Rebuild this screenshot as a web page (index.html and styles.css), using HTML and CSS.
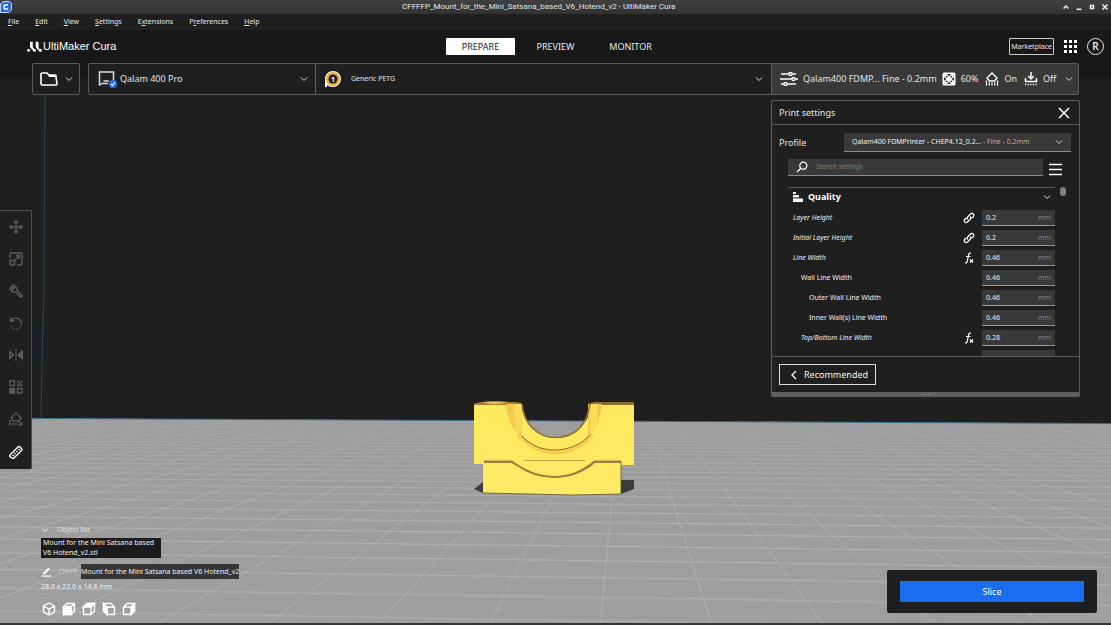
FILE: index.html
```html
<!DOCTYPE html>
<html lang="en">
<head>
<meta charset="utf-8">
<title>CFFFFP_Mount_for_the_Mini_Satsana_based_V6_Hotend_v2 - UltiMaker Cura</title>
<link rel="stylesheet" href="styles.css">
</head>
<body>
<svg class="scene" viewBox="0 0 1111 625" preserveAspectRatio="xMidYMid slice" aria-hidden="true">
  <defs>
    <clipPath id="plate"><path d="M0 418.500L41 418.500 1111 423.500V625H0Z"/></clipPath>
    <linearGradient id="haze" x1="0" x2="0" y1="0" y2="1"><stop offset="0" stop-color="#9e9e9e" stop-opacity=".75"/><stop offset="1" stop-color="#a2a2a2" stop-opacity="0"/></linearGradient>
    <linearGradient id="fillet" x1="0" x2="1"><stop offset="0" stop-color="#f6c952"/><stop offset=".5" stop-color="#fbd956"/><stop offset="1" stop-color="#f3c44e"/></linearGradient>
    <linearGradient id="body" x1="0" x2="0" y1="0" y2="1"><stop offset="0" stop-color="#ffe95c"/><stop offset="1" stop-color="#fdea66"/></linearGradient>
  </defs>
  <rect width="1111" height="625" fill="#1f1f1f"/>
  <g clip-path="url(#plate)">
    <rect width="1111" height="625" fill="#a0a0a0"/>
    <path class="grid-minor" id="grid-minor"/>
    <path class="grid-major" id="grid-major"/>
    <rect y="418" width="1111" height="110" fill="url(#haze)"/>
  </g>
  <path d="M45 80L44 290 42.500 340 41 418.500" fill="none" stroke="#1d4a5c"/>
  <path d="M32 419L41 418.500 1111 423.500" fill="none" stroke="#3b6c83"/>
  <path d="M474 489L483 482V493ZM621 480H634V489L621 494Z" fill="#3c3c3c"/>
  <path d="M474 404L482 402 495 401 521 403 523 412C526 426 538 437 556 437S586 426 589 413L590 403 601 402H634V465H621V494L573 495 483 493V464H474Z" fill="url(#body)"/>
  <path d="M474 404L482 402 495 401 522 403 521 405H474Z" fill="#a17a35"/>
  <path d="M483 403Q494 401 508 403Q494 405 483 403" fill="#f2c850"/>
  <path d="M589 403L601 402H634V405H589Z" fill="#8d6b31"/>
  <path d="M506 404H522V437Q508 428 506 404ZM588 404H602Q600 425 588 437Z" fill="url(#fillet)"/>
  <path d="M514 404H521V436L516 430ZM590 404H597V425L590 434Z" fill="#fbdc56"/>
  <path d="M522 404C524 424 537 437.500 556 437.500S587 425 590 404" fill="none" stroke="#8f6c35" stroke-width="1.500"/>
  <path d="M518 434C530 447 542 452.500 556 452.500S583 446 592 434" fill="none" stroke="#f6cc50" stroke-width="4"/>
  <path d="M522 436C530 445 541 450 555 450S582 444 590 435" fill="none" stroke="#8f6c35"/>
  <path d="M524 460.500H585" stroke="#9b7e35" stroke-width=".7"/>
  <path d="M484 460.500H512L517 464Q535 476 554 476Q576 476 594 460.500H621V463H595Q577 478 554 478Q534 478 515 465L511 463H484Z" fill="#a17d3b"/>
  <path d="M483 493L573 495 621 494V462" fill="none" stroke="#5a5437" stroke-width=".8"/>
</svg>

<header class="titlebar">
  <svg class="app-icon" viewBox="0 0 12 12" aria-hidden="true"><path d="M3 .5H9.500L11.500 2.500V9L9 11.500H.5V3Z" fill="#2b6be4" stroke="#b9d1ff"/><path d="M8 4H5Q4 4 4 5V7Q4 8 5 8H8" fill="none" stroke="#fff" stroke-width="1.300"/></svg>
  <h1 class="window-title">CFFFFP_Mount_for_the_Mini_Satsana_based_V6_Hotend_v2 - UltiMaker Cura</h1>
  <div class="window-buttons">
    <button type="button" aria-label="Shade"><svg viewBox="0 0 8 8"><path d="M1.500 5.500L4 3 6.500 5.500"/></svg></button>
    <button type="button" aria-label="Minimize"><svg viewBox="0 0 8 8"><path d="M1.500 6.300H6.500"/></svg></button>
    <button type="button" aria-label="Maximize"><svg viewBox="0 0 8 8"><path d="M2.500 2.500H5.500V5.500H2.500Z"/></svg></button>
    <button type="button" aria-label="Close window"><svg viewBox="0 0 8 8"><path d="M1.500 1.500L6.500 6.500M6.500 1.500L1.500 6.500"/></svg></button>
  </div>
</header>

<nav class="menubar" aria-label="Menu">
  <button type="button"><u>F</u>ile</button>
  <button type="button"><u>E</u>dit</button>
  <button type="button"><u>V</u>iew</button>
  <button type="button"><u>S</u>ettings</button>
  <button type="button">E<u>x</u>tensions</button>
  <button type="button">P<u>r</u>eferences</button>
  <button type="button"><u>H</u>elp</button>
</nav>

<div class="header">
  <div class="brand">
    <svg viewBox="0 0 15 11" aria-hidden="true"><path d="M3 .8H5.800V6L8.300 9.500 7 10.500 5 8.500 3 6ZM8.700 .8H11.500V6L12.500 8 11 9 8.700 6Z" fill="#fff"/><g fill="#fff"><circle cx="1.600" cy="9.200" r="1.500"/><circle cx="7.500" cy="9.200" r="1.500"/><circle cx="13.300" cy="9.200" r="1.500"/></g></svg>
    <span>UltiMaker Cura</span>
  </div>
  <nav class="stages" aria-label="Stages">
    <button type="button" class="stage stage-active">PREPARE</button>
    <button type="button" class="stage">PREVIEW</button>
    <button type="button" class="stage">MONITOR</button>
  </nav>
  <div class="account">
    <button type="button" class="marketplace">Marketplace</button>
    <button type="button" class="icon-button" aria-label="Applications"><svg class="apps-icon" viewBox="0 0 13 13"><path d="M0 0h3v3H0zM5 0h3v3H5zM10 0h3v3h-3zM0 5h3v3H0zM5 5h3v3H5zM10 5h3v3h-3zM0 10h3v3H0zM5 10h3v3H5zM10 10h3v3h-3z" fill="#fff"/></svg></button>
    <button type="button" class="avatar">R</button>
  </div>
</div>

<div class="toolbar">
  <button type="button" class="open-file" aria-label="Open file">
    <svg class="folder-icon" viewBox="0 0 18 14"><path d="M1 11.500V2Q1 1 2 1H7L9 3H15Q16 3 16 4V5L17 12Q17 13 16 13H2.500Q1 13 1 11.500Z" fill="none" stroke="#fff" stroke-width="1.600"/><path d="M7 1L9 5H16.500L16 3H9Z" fill="#fff"/></svg>
    <svg class="chevron" viewBox="0 0 8 8"><path d="M1 2.500L4 5.500 7 2.500"/></svg>
  </button>
  <div class="stage-menu">
    <button type="button" class="machine">
      <svg class="printer-icon" viewBox="0 0 20 18"><path d="M1.500 15V2H15.500V10" fill="none" stroke="#ddd" stroke-width="1.500"/><path d="M1 15.500L4 13.500H10M5.500 11H11" fill="none" stroke="#ddd" stroke-width="1.400"/><circle cx="15" cy="14" r="4" fill="#2277ee"/><path d="M13 14L14.500 15.500 17 12.500" fill="none" stroke="#fff" stroke-width="1.100"/></svg>
      <span class="menu-label">Qalam 400 Pro</span>
      <svg class="chevron" viewBox="0 0 8 8"><path d="M1 2.500L4 5.500 7 2.500"/></svg>
    </button>
    <button type="button" class="material">
      <svg class="spool-icon" viewBox="0 0 18 18"><path d="M1 17V9A8 8 0 1 1 9 17Q5 17 3 15V17Z" fill="#fff"/><circle cx="9" cy="9" r="7" fill="#efab32"/><circle cx="9" cy="9" r="4.500" fill="#221d18"/><text class="spool-number" x="9" y="11.500">1</text></svg>
      <span class="menu-label small">Generic PETG</span>
      <svg class="chevron" viewBox="0 0 8 8"><path d="M1 2.500L4 5.500 7 2.500"/></svg>
    </button>
    <button type="button" class="print-setup">
      <svg class="sliders-icon" viewBox="0 0 18 14"><g fill="none" stroke="#fff" stroke-width="1.500"><path d="M1 2H8.500M12.500 2H16M0 7H11.500M15.500 7H18M1 12H3.500M7.500 12H16"/><circle cx="10.500" cy="2" r="1.600"/><circle cx="13.500" cy="7" r="1.600"/><circle cx="5.500" cy="12" r="1.600"/></g></svg>
      <span class="menu-label">Qalam400 FDMP... Fine - 0.2mm</span>
      <svg class="infill-icon" viewBox="0 0 14 14"><rect x=".5" y=".5" width="13" height="13" rx="1.500" fill="#fff"/><g fill="#303030"><path d="M5 2H9L7 4.500ZM5 12H9L7 9.500ZM2 5V9L4.500 7ZM12 5V9L9.500 7Z"/><circle cx="4.700" cy="4.700" r=".9"/><circle cx="9.300" cy="4.700" r=".9"/><circle cx="4.700" cy="9.300" r=".9"/><circle cx="9.300" cy="9.300" r=".9"/></g></svg>
      <span class="setup-value">60%</span>
      <svg class="support-icon" viewBox="0 0 14 14"><path d="M7 1L12 6 9.500 9H4.500L2 6Z" fill="none" stroke="#fff" stroke-width="1.400"/><path d="M1.500 13.500V8.500M4.200 13.500V10.500M7 13.500V10.500M9.800 13.500V10.500M12.500 13.500V8.500" stroke="#fff" stroke-width="1.200"/></svg>
      <span class="setup-value">On</span>
      <svg class="adhesion-icon" viewBox="0 0 14 14"><path d="M7 0V6.500M4.200 4L7 7 9.800 4M1.500 6V9.500H12.500V6" fill="none" stroke="#fff" stroke-width="1.500"/><path d="M1 12.500H13" stroke="#fff" stroke-width="1.300" stroke-dasharray="1.300 1.300"/></svg>
      <span class="setup-value">Off</span>
      <svg class="chevron setup-chevron" viewBox="0 0 8 8"><path d="M1 2.500L4 5.500 7 2.500"/></svg>
    </button>
  </div>
</div>

<main class="workspace">
  <div class="tools" role="toolbar" aria-label="Tools">
    <button type="button" aria-label="Move"><svg viewBox="0 0 14 14"><path d="M7 1V13M1 7H13M5 3L7 1 9 3M5 11L7 13 9 11M3 5L1 7 3 9M11 5L13 7 11 9"/></svg></button>
    <button type="button" aria-label="Scale"><svg viewBox="0 0 14 14"><path d="M1 6V2Q1 1 2 1H12Q13 1 13 2V12Q13 13 12 13H8M1 8.500H5.500V13H2Q1 13 1 12ZM6 8L10.500 3.500M7 3.500H10.500V7"/></svg></button>
    <button type="button" aria-label="Paint"><svg viewBox="0 0 14 14"><path d="M4.500 .8L.8 4.500 4 8 6.500 8.200 12 13.200 13.200 12 8.200 6.500 8 4ZM2.500 6.500L6.500 2.500M2.800 2.800L4.500 4.500"/></svg></button>
    <button type="button" aria-label="Rotate"><svg viewBox="0 0 14 14"><path d="M1.500 1V5H5.500M2 4.500Q5 1 9 2.500Q12.500 4 12.500 8"/><path d="M12.500 9Q11 13 7 13Q2 13 1.500 8" stroke-dasharray="1.500 1.500"/></svg></button>
    <button type="button" aria-label="Mirror"><svg viewBox="0 0 14 14"><path d="M1 3.500V10.500L4.500 7Z"/><path class="solid" d="M13.500 3V11L9 7Z"/><path d="M7 1V13" stroke-dasharray="2 1.300"/></svg></button>
    <button type="button" aria-label="Per model settings"><svg viewBox="0 0 14 14"><path d="M1 1H5.500V5.500H1ZM8.500 8.500H13V13H8.500ZM8 3L10 1M8 6.200L13.200 1M11 6.200L13.200 4"/><path class="solid" d="M1 8.500H5.500V13H1Z"/></svg></button>
    <button type="button" aria-label="Support blocker"><svg viewBox="0 0 14 14"><path d="M7 1L12 6 9.500 9H4.500L2 6ZM1 13.500V8M4 13.500V11M7 13.500V11M10 10L13.500 13.500M13.500 10L10 13.500"/></svg></button>
    <button type="button" class="tool-enabled" aria-label="Measure"><svg viewBox="0 0 14 14"><path d="M1 10L9 2Q10 1 11 2L12.500 3.500Q13.500 4.500 12.500 5.500L5 13Q4 14 3 13L1 11.500Q.3 10.800 1 10ZM3.500 10L5 11M5.500 8L6.500 9M7.500 6L8.500 7M9.500 4L11 5"/></svg></button>
  </div>

  <section class="objects" aria-label="Objects">
    <button type="button" class="object-toggle"><svg class="chevron" viewBox="0 0 8 8"><path d="M1 2.500L4 5.500 7 2.500"/></svg>Object list</button>
    <p class="object-name">Mount for the Mini Satsana based V6 Hotend_v2.stl</p>
    <div class="job">
      <svg class="pencil-icon" viewBox="0 0 10 10" aria-hidden="true"><path d="M1 7.500L1.500 5.500 6.500 .8 8 2 3 7ZM0 8.600H9V9.800H0Z" fill="#fff"/></svg>
      <span class="job-prefix">CFFFP_</span>
      <span class="job-tip">Mount for the Mini Satsana based V6 Hotend_v2</span>
    </div>
    <p class="dimensions">28.0 x 22.0 x 14.8 mm</p>
    <div class="views">
      <button type="button" aria-label="3D view"><svg viewBox="0 0 14 14"><path d="M7 1L12.500 4V10L7 13 1.500 10V4ZM1.500 4L7 7 12.500 4M7 7V13"/></svg></button>
      <button type="button" aria-label="Front view"><svg viewBox="0 0 14 14"><path d="M1.500 5L5 1.500H12.500V9L9 12.500H1.500ZM9 5L12.500 1.500"/><path class="solid" d="M1.500 4.500H9.500V12.500H1.500Z"/></svg></button>
      <button type="button" aria-label="Top view"><svg viewBox="0 0 14 14"><path d="M1.500 5L5 1.500H12.500V9L9 12.500H1.500ZM9 5V12"/><path class="solid" d="M1.500 5L5 1.500H12.500L9 5Z"/></svg></button>
      <button type="button" aria-label="Left view"><svg viewBox="0 0 14 14"><path d="M1.500 1.500H9L12.500 5V12.500H5L1.500 9ZM5 5H12M5 5V12"/><path class="solid" d="M1.500 1.500L5 5V12.500L1.500 9Z"/></svg></button>
      <button type="button" aria-label="Right view"><svg viewBox="0 0 14 14"><path d="M1.500 5L5 1.500H12.500V9L9 12.500H1.500ZM1.500 5H9"/><path class="solid" d="M9 5L12.500 1.500V9L9 12.500Z"/></svg></button>
    </div>
  </section>

  <aside class="side">
    <section class="panel" aria-label="Print settings">
      <div class="panel-header">
        <h2>Print settings</h2>
        <button type="button" class="icon-button" aria-label="Close"><svg class="close-icon" viewBox="0 0 12 12"><path d="M1 1L11 11M11 1L1 11"/></svg></button>
      </div>
      <div class="profile">
        <label for="profile">Profile</label>
        <div class="select-wrap">
          <select id="profile"><option>Qalam400 FDMPrinter - CHEP4.12_0.2...</option></select>
          <span class="select-note">- Fine - 0.2mm</span>
          <svg class="chevron select-arrow" viewBox="0 0 8 8"><path d="M1 2.500L4 5.500 7 2.500"/></svg>
        </div>
      </div>
      <div class="search-row">
        <div class="search">
          <svg viewBox="0 0 12 12" aria-hidden="true"><circle cx="7.300" cy="4.700" r="3.500"/><path d="M4.800 7.200L1 11"/></svg>
          <input type="search" placeholder="Search settings" aria-label="Search settings">
        </div>
        <button type="button" class="icon-button" aria-label="Setting visibility"><svg class="burger-icon" viewBox="0 0 13 13"><path d="M0 1.500H13M0 6.500H13M0 11.500H13"/></svg></button>
      </div>
      <div class="settings">
        <div class="settings-list">
          <button type="button" class="category">
            <svg class="quality-icon" viewBox="0 0 10 10"><path d="M0 0H3V2H0ZM0 3H6V5.500H0ZM0 6.500H10V10H0Z" fill="#fff"/></svg>
            <span>Quality</span>
            <svg class="chevron" viewBox="0 0 8 8"><path d="M1 2.500L4 5.500 7 2.500"/></svg>
          </button>
          <div class="setting changed">
            <label for="s1">Layer Height</label>
            <svg class="mark" viewBox="0 0 12 12"><path d="M5 7.500Q3.500 6 5 4.500L7.500 2Q9 .8 10.300 2Q11.500 3.300 10 5L8.500 6.300M7 4.500Q8.500 6 7 7.500L4.500 10Q3 11.200 1.700 10Q.5 8.700 2 7L3.500 5.700"/></svg>
            <div class="value"><input id="s1" type="text" value="0.2"><span>mm</span></div>
          </div>
          <div class="setting changed">
            <label for="s2">Initial Layer Height</label>
            <svg class="mark" viewBox="0 0 12 12"><path d="M5 7.500Q3.500 6 5 4.500L7.500 2Q9 .8 10.300 2Q11.500 3.300 10 5L8.500 6.300M7 4.500Q8.500 6 7 7.500L4.500 10Q3 11.200 1.700 10Q.5 8.700 2 7L3.500 5.700"/></svg>
            <div class="value"><input id="s2" type="text" value="0.2"><span>mm</span></div>
          </div>
          <div class="setting changed">
            <label for="s3">Line Width</label>
            <svg class="mark" viewBox="0 0 12 12"><path d="M8 1.200Q6 .5 5.500 3L4.300 9Q4 11.500 2 10.800M3 4.500H7.500M7 7.500L10 10.500M10 7.500L7 10.500"/></svg>
            <div class="value"><input id="s3" type="text" value="0.46"><span>mm</span></div>
          </div>
          <div class="setting level-1">
            <label for="s4">Wall Line Width</label>
            <div class="value"><input id="s4" type="text" value="0.46"><span>mm</span></div>
          </div>
          <div class="setting level-2">
            <label for="s5">Outer Wall Line Width</label>
            <div class="value"><input id="s5" type="text" value="0.46"><span>mm</span></div>
          </div>
          <div class="setting level-2">
            <label for="s6">Inner Wall(s) Line Width</label>
            <div class="value"><input id="s6" type="text" value="0.46"><span>mm</span></div>
          </div>
          <div class="setting changed level-1">
            <label for="s7">Top/Bottom Line Width</label>
            <svg class="mark" viewBox="0 0 12 12"><path d="M8 1.200Q6 .5 5.500 3L4.300 9Q4 11.500 2 10.800M3 4.500H7.500M7 7.500L10 10.500M10 7.500L7 10.500"/></svg>
            <div class="value"><input id="s7" type="text" value="0.28"><span>mm</span></div>
          </div>
          <div class="next-value"></div>
        </div>
        <div class="scroll-thumb"></div>
      </div>
      <div class="panel-footer">
        <button type="button" class="recommended"><svg class="chevron" viewBox="0 0 8 10"><path d="M6 1L2 5 6 9"/></svg>Recommended</button>
      </div>
      <div class="resize-handle"><i></i><i></i><i></i></div>
    </section>
    <div class="action">
      <button type="button" class="slice">Slice</button>
    </div>
  </aside>
</main>
<script src="scene.js"></script>
</body>
</html>
```
FILE: styles.css
```css
* {
  box-sizing: border-box;
}

body {
  margin: 0;
  min-height: 100vh;
  display: flex;
  flex-direction: column;
  position: relative;
  isolation: isolate;
  color: #e6e6e6;
  background: #1f1f1f;
  font: 7px/10px "Noto Sans", sans-serif;
}

button,
input,
select {
  font: inherit;
  color: inherit;
}

button {
  padding: 0;
  border: 0;
  background: none;
}

h1,
h2,
p {
  margin: 0;
  font-size: inherit;
  font-weight: 400;
}

svg {
  flex: none;
}

.scene {
  position: absolute;
  inset: 0;
  width: 100%;
  height: 100%;
  z-index: -1;
}

.grid-major {
  fill: none;
  stroke: #b8b8b8;
  stroke-opacity: 0.65;
}

.grid-minor {
  fill: none;
  stroke: #8c8c8c;
  stroke-opacity: 0.22;
}

.chevron {
  width: 8px;
  height: 8px;
  fill: none;
  stroke: #e0e0e0;
}

.icon-button {
  display: flex;
}

/* Window chrome */
.titlebar {
  height: 14px;
  display: grid;
  grid-template-columns: 402px 1fr auto;
  align-items: center;
  background: linear-gradient(#404040, #323232);
}

.app-icon {
  width: 12px;
  height: 12px;
}

.window-title {
  font: 8px/12px Roboto, "Noto Sans", sans-serif;
}

.window-buttons {
  display: flex;
  gap: 5px;
  padding-right: 2px;
}

.window-buttons button {
  display: flex;
}

.window-buttons svg {
  width: 8px;
  height: 8px;
  fill: none;
  stroke: #f0f0f0;
  stroke-width: 1.5;
}

.menubar {
  height: 16px;
  display: flex;
  align-items: center;
  gap: 16px;
  padding-left: 8px;
  background: #1f1f1f;
}

/* Brand, stages, account */
.header {
  height: 49px;
  display: grid;
  grid-template-columns: 1fr auto 1fr;
  align-items: start;
  padding: 8px 7px 0 27px;
  background: #181818;
}

.brand {
  display: flex;
  align-items: center;
  gap: 1px;
  color: #fff;
  font: 11px/16px "Liberation Sans", Arial, sans-serif;
}

.brand svg {
  width: 15px;
  height: 11px;
}

.stages {
  display: flex;
  gap: 6px;
  margin-right: 20px;
}

.stage {
  width: 69px;
  height: 17px;
  font-size: 9px;
  border-radius: 1px;
}

.stage-active {
  color: #222;
  background: #fff;
}

.account {
  display: flex;
  align-items: center;
  justify-content: flex-end;
  gap: 10px;
}

.marketplace {
  padding: 2px 1px;
  height: 17px;
  border: 1px solid #ccc;
  border-radius: 1px;
}

.apps-icon {
  width: 13px;
  height: 13px;
}

.avatar {
  width: 17px;
  height: 17px;
  border: 1px solid #eee;
  border-radius: 50%;
  font-size: 10px;
  line-height: 15px;
  font-weight: 600;
}

/* Stage menu */
.toolbar {
  display: flex;
  gap: 8px;
  height: 32px;
  margin: -16px 32px 0;
  font-size: 9px;
}

.open-file {
  width: 48px;
  display: flex;
  align-items: center;
  justify-content: space-between;
  padding: 0 6px 0 7px;
  border: 1px solid #5c5c5c;
  border-radius: 2px;
  background: #1f1f1f;
}

.folder-icon {
  width: 18px;
  height: 14px;
}

.stage-menu {
  flex: 1;
  display: grid;
  grid-template-columns: 227px 1fr 307px;
  border: 1px solid #5c5c5c;
  border-radius: 2px;
  background: #1f1f1f;
}

.stage-menu button {
  display: flex;
  align-items: center;
  text-align: left;
}

.stage-menu .material {
  padding: 0 8px;
  gap: 9px;
}

.stage-menu .machine {
  padding: 0 7px 0 9px;
  gap: 2px;
  border-right: 1px solid #5c5c5c;
}

.stage-menu .print-setup {
  padding: 0 8px;
  gap: 5px;
  border-left: 1px solid #5c5c5c;
  background: #393939;
}

.menu-label {
  flex: 1;
  white-space: nowrap;
}

.small {
  font-size: 7px;
}

.printer-icon {
  width: 20px;
  height: 18px;
}

.spool-icon {
  width: 18px;
  height: 18px;
}

.spool-number {
  font: 700 7px "Noto Sans", sans-serif;
  fill: #fff;
  text-anchor: middle;
}

.sliders-icon {
  width: 18px;
  height: 14px;
}

.infill-icon,
.support-icon,
.adhesion-icon {
  width: 14px;
  height: 14px;
}

.setup-value {
  margin-right: 2px;
}

.setup-chevron {
  margin-left: 2px;
}

/* Workspace */
.workspace {
  flex: 1;
  display: grid;
  grid-template-columns: 32px 1fr auto;
  border-bottom: 2px solid #353535;
}

.tools {
  align-self: start;
  display: flex;
  flex-direction: column;
  margin-top: 115px;
  border: 1px solid #505050;
  border-left: 0;
  border-bottom: 0;
  border-radius: 0 2px 2px 0;
  background: #1f1f1f;
}

.tools button {
  height: 32px;
  display: grid;
  place-items: center;
  color: #5c5c5c;
}

.tools .tool-enabled {
  color: #fff;
  height: 34px;
}

.tools svg,
.views svg {
  width: 14px;
  height: 14px;
  fill: none;
  stroke: currentColor;
  stroke-width: 1.4;
}

.tools .solid,
.views .solid {
  fill: currentColor;
}

.objects {
  align-self: end;
  display: flex;
  flex-direction: column;
  align-items: flex-start;
  padding: 0 0 7px 9px;
}

.object-toggle {
  display: flex;
  align-items: center;
  gap: 8px;
  margin-bottom: 3px;
  color: #e0e0e0;
}

.object-toggle .chevron {
  stroke: #fff;
}

.object-name {
  width: 120px;
  padding: 0 2px;
  color: #f0f0f0;
  background: #1b1b1b;
}

.job {
  display: flex;
  align-items: center;
  margin: 6px 0 2px;
}

.pencil-icon {
  width: 10px;
  height: 10px;
  margin: 0 6px 0 1px;
}

.job-prefix {
  width: 23px;
  color: #d0d0d0;
}

.job-tip {
  line-height: 15px;
  white-space: nowrap;
  color: #f0f0f0;
  background: #353535;
}

.dimensions {
  margin: 1px 0 10px;
  color: #f0f0f0;
}

.views {
  display: flex;
  gap: 6px;
  padding-left: 1px;
}

.views button {
  display: flex;
  color: #fff;
}

.side {
  display: flex;
  flex-direction: column;
  align-items: flex-end;
  justify-content: space-between;
  padding: 5px 14px 10px 0;
}

/* Print settings panel */
.panel {
  width: 309px;
  margin-right: 17px;
  border: 1px solid #5c5c5c;
  border-bottom: 0;
  border-radius: 2px;
  background: #1f1f1f;
}

.panel-header {
  display: flex;
  align-items: center;
  justify-content: space-between;
  height: 24px;
  padding: 0 9px 0 7px;
  border-bottom: 1px solid #5c5c5c;
  font-size: 9px;
}

.close-icon {
  width: 12px;
  height: 12px;
  stroke: #fff;
  stroke-width: 1.5;
}

.burger-icon {
  width: 13px;
  height: 13px;
  stroke: #fff;
  stroke-width: 1.3;
}

.profile {
  display: flex;
  align-items: center;
  justify-content: space-between;
  padding: 8px 8px 7px 7px;
  font-size: 9px;
}

.select-wrap {
  position: relative;
  width: 227px;
  height: 19px;
  font-size: 7px;
}

.select-wrap select {
  appearance: none;
  width: 100%;
  height: 100%;
  padding: 0 8px;
  border: 0;
  border-bottom: 1px solid #8c8c8c;
  border-radius: 0;
  color: #f0f0f0;
  background: #393939;
}

.select-note {
  position: absolute;
  left: 139px;
  top: 4px;
  color: #b0b0b0;
  pointer-events: none;
}

.select-arrow {
  position: absolute;
  right: 8px;
  top: 5px;
  pointer-events: none;
}

.search-row {
  display: flex;
  align-items: flex-end;
  gap: 6px;
  padding: 0 17px 0 16px;
}

.search {
  flex: 1;
  display: flex;
  align-items: center;
  height: 17px;
  padding-left: 8px;
  gap: 8px;
  border-bottom: 1px solid #8c8c8c;
  background: #393939;
}

.search svg {
  width: 12px;
  height: 12px;
  fill: none;
  stroke: #fff;
  stroke-width: 1.3;
}

.search input {
  flex: 1;
  min-width: 0;
  padding: 0;
  border: 0;
  background: none;
}

.search input::placeholder {
  color: #808080;
  font-style: italic;
}

.settings {
  display: flex;
  gap: 5px;
  margin-top: 11px;
  padding: 0 13px 0 16px;
}

.settings-list {
  flex: 1;
}

.category {
  width: 100%;
  height: 20px;
  display: flex;
  align-items: center;
  gap: 5px;
  padding: 0 4px 1px 5px;
  margin-bottom: 3px;
  border-top: 1px solid #5c5c5c;
  color: #fff;
  font-size: 9px;
  font-weight: 700;
}

.category span {
  flex: 1;
  text-align: left;
}

.quality-icon {
  width: 10px;
  height: 10px;
}

.setting {
  height: 16px;
  display: flex;
  align-items: center;
  margin-bottom: 4px;
  padding-left: 5px;
}

.setting label {
  flex: 1;
  color: #f0f0f0;
}

.changed label {
  font-style: italic;
}

.level-1 {
  padding-left: 13px;
}

.level-2 {
  padding-left: 21px;
}

.mark {
  width: 12px;
  height: 12px;
  margin-right: 7px;
  fill: none;
  stroke: #fff;
  stroke-width: 1.2;
}

.value,
.next-value {
  width: 73px;
  background: #393939;
}

.value {
  height: 16px;
  display: flex;
  align-items: center;
  padding: 0 4px;
  border-bottom: 1px solid #999;
}

.value input {
  flex: 1;
  min-width: 0;
  padding: 0;
  border: 0;
  color: #f0f0f0;
  background: none;
}

.value span {
  color: #808080;
}

.next-value {
  height: 6px;
  margin-left: auto;
}

.scroll-thumb {
  width: 6px;
  height: 9px;
  border-radius: 3px;
  background: #808080;
}

.panel-footer {
  padding: 7px;
  border-top: 1px solid #5c5c5c;
}

.recommended {
  height: 21px;
  display: flex;
  align-items: center;
  gap: 6px;
  padding: 0 7px 0 10px;
  border: 1px solid #ddd;
  color: #f0f0f0;
  font-size: 9px;
}

.recommended .chevron {
  height: 10px;
  stroke: #fff;
  stroke-width: 1.3;
}

.resize-handle {
  height: 5px;
  display: flex;
  align-items: center;
  justify-content: center;
  gap: 2px;
  background: #606060;
}

.resize-handle i {
  width: 1px;
  height: 1px;
  background: #999;
}

/* Slice */
.action {
  width: 210px;
  padding: 11px 13px;
  border-radius: 2px;
  background: #1f1f1f;
}

.slice {
  width: 100%;
  height: 21px;
  color: #fff;
  background: #196ef0;
  font-size: 9px;
}
```
FILE: scene.js
```js
// Build plate grid in one-point perspective.
const vanish = { x: 625, y: 353 };
const bottom = 625;

function depthLine(slope) {
  const x = vanish.x + slope * (bottom - vanish.y);
  return `M${vanish.x} ${vanish.y}L${x} ${bottom}`;
}

function crossLine(inverseDepth) {
  const depth = 1 / inverseDepth;
  const y = vanish.y + depth;
  const tilt = 0.000063 * depth;
  return `M0 ${y - 640 * tilt}L1111 ${y + 471 * tilt}`;
}

let major = "";
let minor = "";
for (let k = -40; k <= 40; k++) {
  major += depthLine(0.32 + 0.41 * k);
}
for (let k = 0; k <= 34; k++) {
  major += crossLine(0.00372 + 0.00036 * k);
  for (let j = 1; j < 6; j++) {
    minor += crossLine(0.00372 + 0.00036 * (k + j / 6));
  }
}
document.getElementById("grid-major").setAttribute("d", major);
document.getElementById("grid-minor").setAttribute("d", minor);
```
